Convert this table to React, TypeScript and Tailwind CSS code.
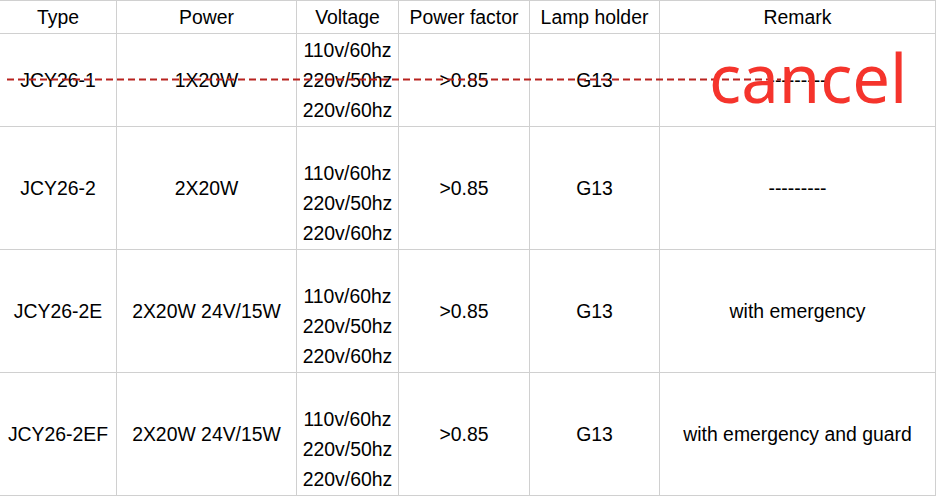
const HEADERS = ["Type", "Power", "Voltage", "Power factor", "Lamp holder", "Remark"];

const VOLTAGES = ["110v/60hz", "220v/50hz", "220v/60hz"];

type Row = { type: string; power: string; remark: string; blankTop: boolean };

const ROWS: Row[] = [
  { type: "JCY26-1", power: "1X20W", remark: "---------", blankTop: false },
  { type: "JCY26-2", power: "2X20W", remark: "---------", blankTop: true },
  { type: "JCY26-2E", power: "2X20W 24V/15W", remark: "with emergency", blankTop: true },
  { type: "JCY26-2EF", power: "2X20W 24V/15W", remark: "with emergency and guard", blankTop: true },
];

function Cell({ children }: { children: React.ReactNode }) {
  return <div className="flex items-center justify-center bg-white text-center">{children}</div>;
}

export default function App() {
  return (
    <div className="h-[497px] w-[937px] overflow-hidden bg-white font-['Liberation_Sans',Arial,sans-serif] text-[19.4px] leading-[30px] text-black">
      <div className="relative">
        <div className="grid w-[936px] grid-cols-[116px_179px_101px_130px_129px_275px] grid-rows-[32px_92px_122px_122px_122px] gap-px bg-[#d0d0d0] pb-px pr-px pt-px">
          {HEADERS.map((h) => (
            <Cell key={h}>{h}</Cell>
          ))}
          {ROWS.map((row) => (
            <div key={row.type} className="contents">
              <Cell>{row.type}</Cell>
              <Cell>{row.power}</Cell>
              <Cell>
                <div className="flex flex-col">
                  {row.blankTop && <span className="h-[30px]" />}
                  {VOLTAGES.map((v) => (
                    <span key={v}>{v}</span>
                  ))}
                </div>
              </Cell>
              <Cell>&gt;0.85</Cell>
              <Cell>G13</Cell>
              <Cell>{row.remark}</Cell>
            </div>
          ))}
        </div>

        {/* the first model is struck through and marked as cancelled */}
        <svg className="pointer-events-none absolute left-0 top-0" width="937" height="120">
          <line x1="7" y1="79.5" x2="781" y2="79.5" stroke="#b8221f" strokeWidth="2" strokeDasharray="7 4" />
        </svg>
        <span className="pointer-events-none absolute left-[709px] top-[44px] font-['Noto_Sans',sans-serif] text-[67px] leading-none text-[#f5342c]">
          cancel
        </span>
      </div>
    </div>
  );
}
